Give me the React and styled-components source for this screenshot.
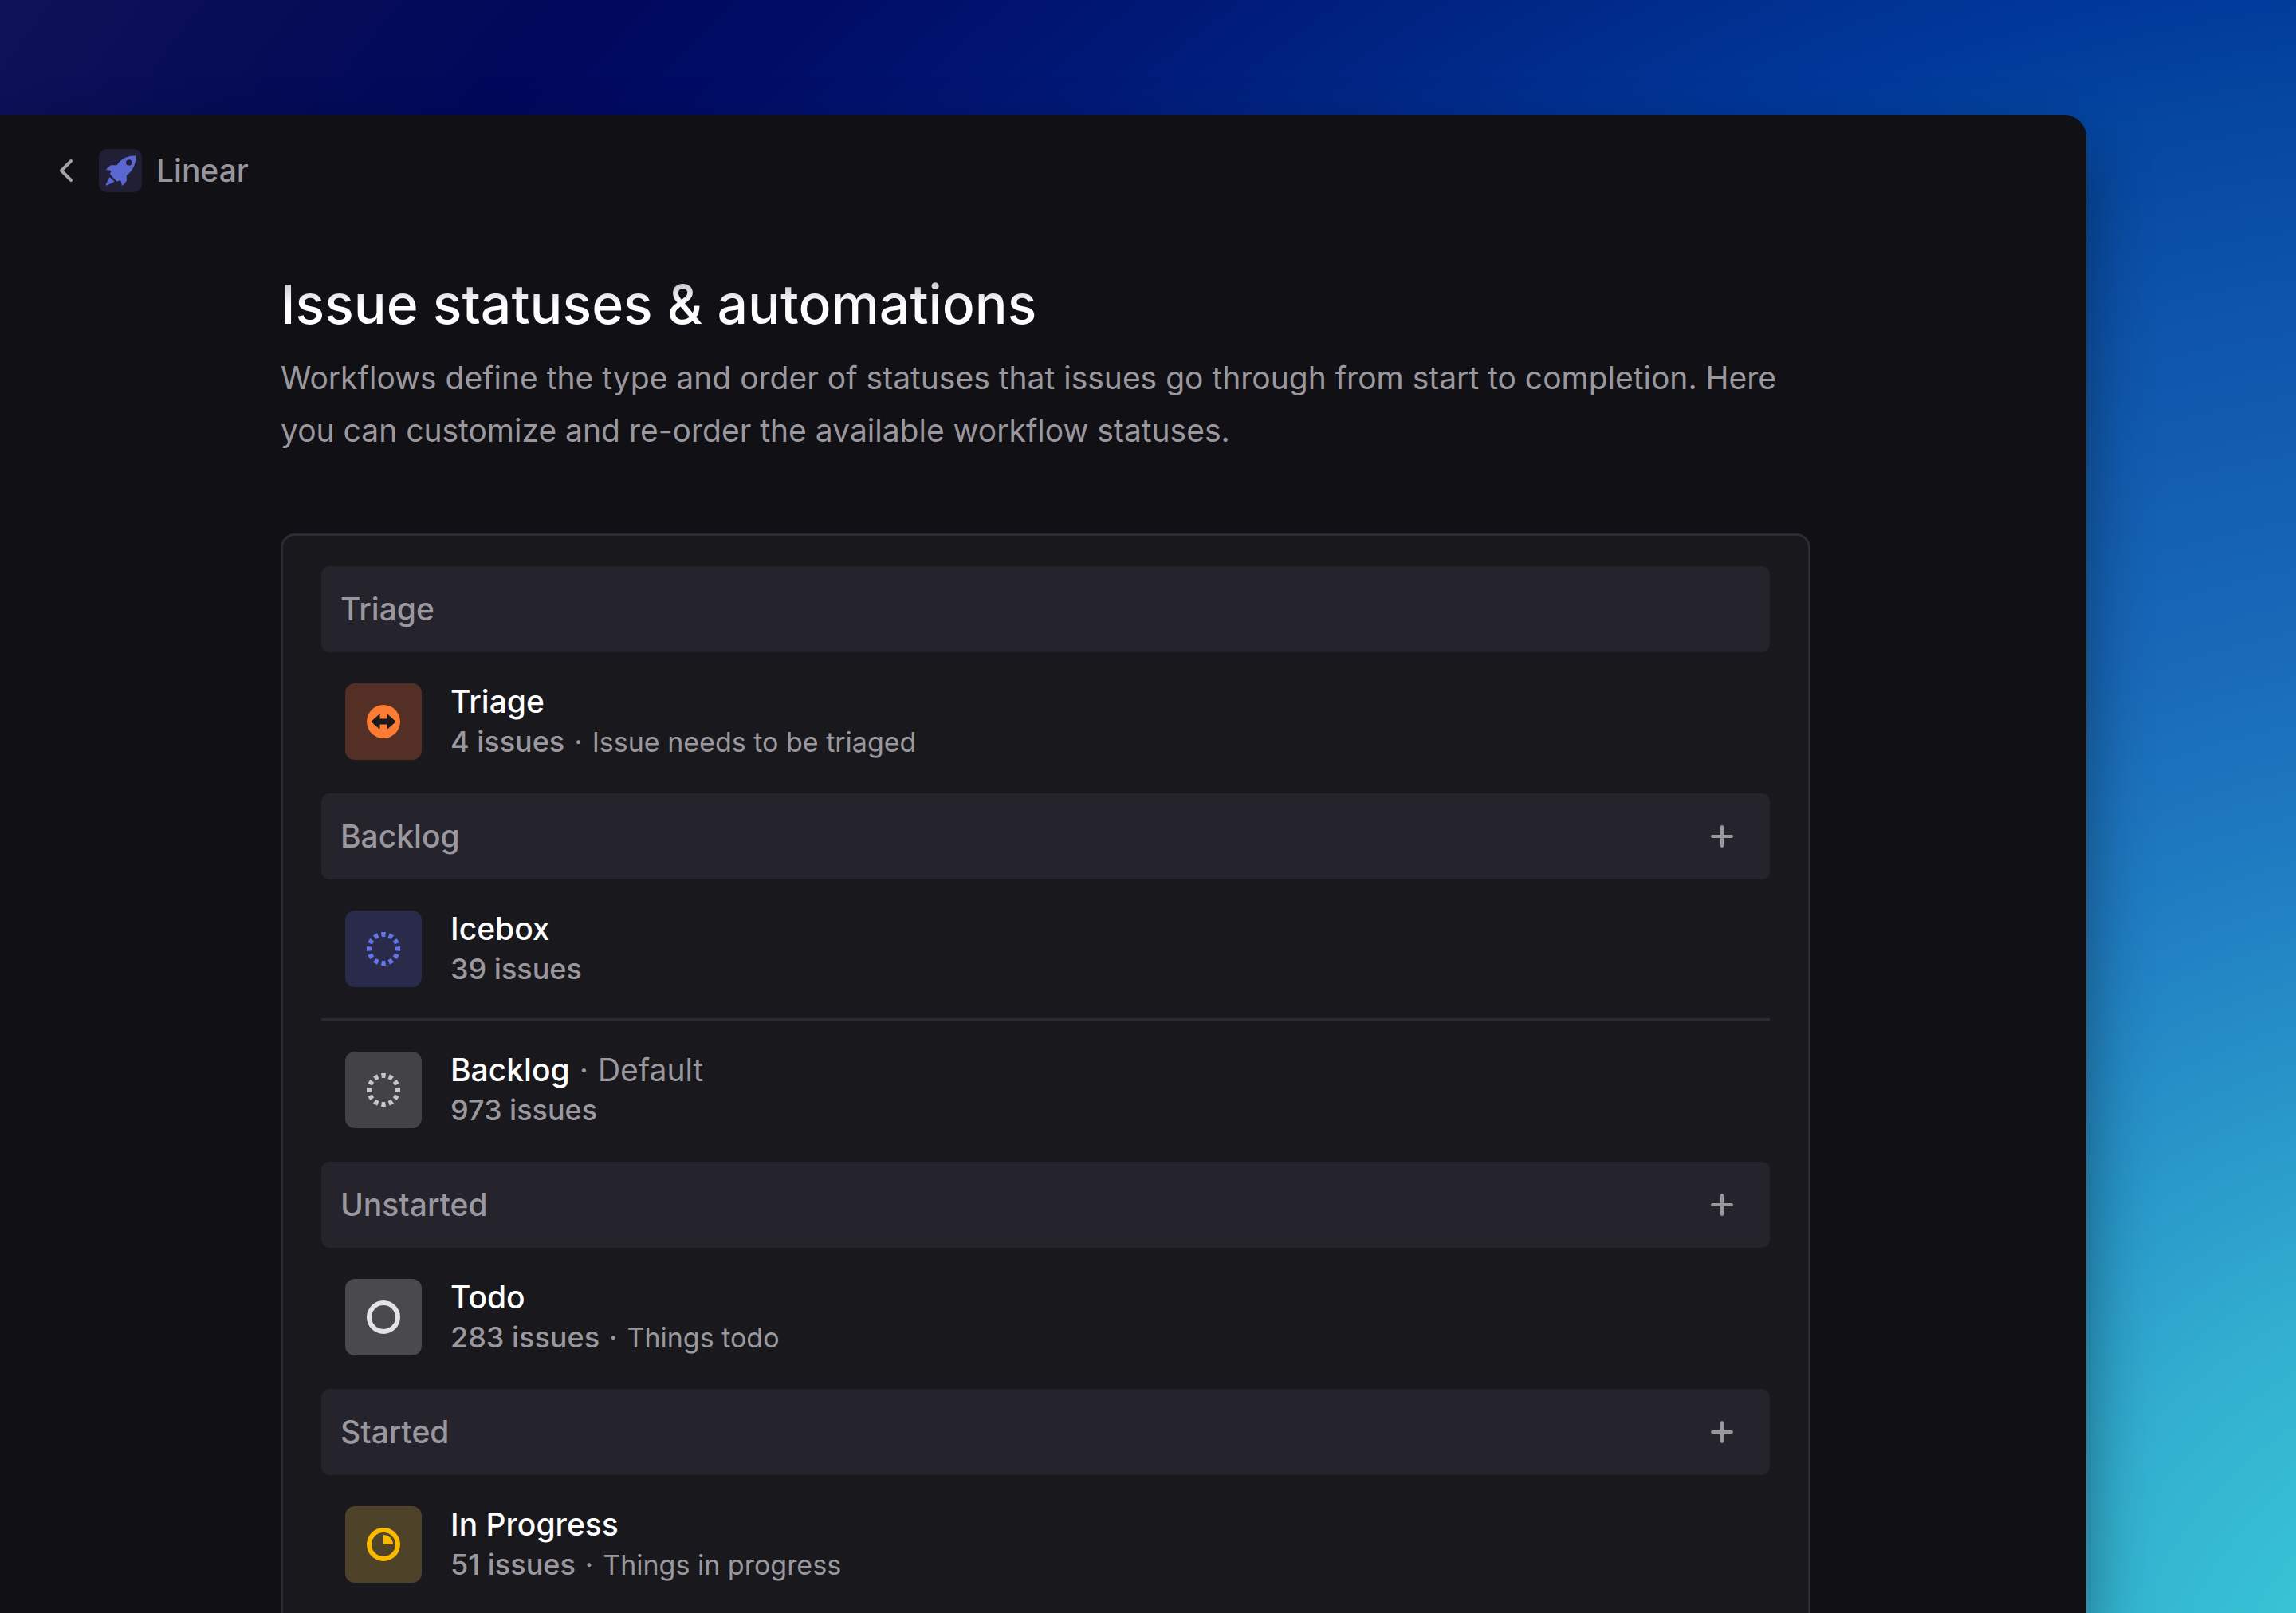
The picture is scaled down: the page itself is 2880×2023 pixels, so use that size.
import React from "react";
import styled, { createGlobalStyle } from "styled-components";

const GlobalStyle = createGlobalStyle`
  *, *::before, *::after { box-sizing: border-box; }
  body { margin: 0; background: #0c1055; }
  h1, h2, h3, p, ul { margin: 0; padding: 0; font-weight: inherit; }
  ul { list-style: none; }
`;

const Page = styled.div`
  height: 100vh;
  overflow: hidden;
  display: flex;
  padding: 144px 263px 0 0;
  font-family: Inter, "Liberation Sans", sans-serif;
  font-size: 39px;
  color: #9a989e;
  background: radial-gradient(
    circle farthest-corner at 110% 110%,
    #38c6d6 8%,
    #33b0d0 16%,
    #2896c9 23%,
    #207ec2 30%,
    #1868b8 38%,
    #0e55ab 48%,
    #0546a0 55%,
    #00389a 59%,
    #002988 65%,
    #001876 72%,
    #000c65 80%,
    #00085c 85%,
    #060c56 92%,
    #0e1258 100%
  );
`;

const Panel = styled.main`
  flex: 1;
  min-width: 0;
  display: flex;
  flex-direction: column;
  gap: 96px;
  padding-top: 43px;
  background: #111014;
  border-top-right-radius: 28px;
  box-shadow: 0 40px 80px rgba(0, 0, 0, 0.4);
`;

const Breadcrumb = styled.nav`
  display: flex;
  align-items: center;
  padding-left: 64px;
`;

const BackButton = styled.button`
  display: flex;
  align-items: center;
  justify-content: center;
  width: 36px;
  height: 54px;
  margin-right: 24px;
  padding: 0;
  border: 0;
  background: none;
  color: inherit;
`;

const TeamLink = styled.a`
  display: flex;
  align-items: center;
  gap: 18px;
  line-height: 54px;
  font-weight: 500;
  color: #97959b;
  text-decoration: none;
`;

const TeamBadge = styled.span`
  display: flex;
  width: 54px;
  height: 54px;
  border-radius: 10px;
  background: #211f36;
`;

const Content = styled.div`
  display: flex;
  flex-direction: column;
  padding: 0 346px 0 352px;
`;

const Title = styled.h1`
  align-self: flex-start;
  margin-bottom: 16px;
  font-size: 68px;
  line-height: 88px;
  font-weight: 500;
  color: transparent;
  background: linear-gradient(#c4c2ca 16%, #ffffff 52%);
  background-clip: text;
  -webkit-background-clip: text;
`;

const Intro = styled.p`
  margin-bottom: 96px;
  line-height: 66px;
`;

const Card = styled.div`
  padding: 38px 48px;
  border: 3px solid #2c2a32;
  border-radius: 18px;
  background: #19181c;
`;

const GroupHeader = styled.header`
  display: flex;
  align-items: center;
  justify-content: space-between;
  height: 108px;
  padding: 0 36px 0 24px;
  border-radius: 10px;
  background: #25232c;
`;

const GroupName = styled.h2`
  font-size: 39px;
  line-height: 52px;
  font-weight: 500;
`;

const AddButton = styled.button`
  display: flex;
  align-items: center;
  justify-content: center;
  width: 48px;
  height: 48px;
  padding: 0;
  border: 0;
  background: none;
  color: #9a989e;
`;

const Row = styled.li`
  display: flex;
  align-items: center;
  gap: 36px;
  padding: 39px 30px;
  height: 177px;
  border-bottom: 3px solid #2c2a32;

  &:last-child {
    border-bottom-color: transparent;
  }
`;

const StatusTile = styled.span`
  flex: none;
  display: flex;
  align-items: center;
  justify-content: center;
  width: 96px;
  height: 96px;
  border-radius: 12px;
  background: ${(p) => p.$fill};
  color: ${(p) => p.$ink};
`;

const RowText = styled.div`
  line-height: 51px;
`;

const StatusName = styled.h3`
  font-size: 39px;
`;

const Strong = styled.span`
  font-weight: 500;
  color: #ffffff;
`;

const Meta = styled.p`
  font-size: 36px;
`;

const Count = styled.span`
  font-weight: 500;
`;

const Separator = styled.span`
  padding: 0 12px;
`;

const Description = styled.span`
  font-size: 34px;
`;

const Chevron = () => (
  <svg width="20" height="32" viewBox="0 0 20 32" fill="none" aria-hidden="true">
    <path d="M17 4 5 16l12 12" stroke="#a3a1a6" strokeWidth="4" strokeLinecap="round" strokeLinejoin="round" />
  </svg>
);

const Rocket = () => (
  <svg width="54" height="54" viewBox="0 0 160 160" aria-hidden="true">
    <path
      fill="#5b67d0"
      fillRule="evenodd"
      d="M137 25C112 24 84 32 67 60L44 60C39 64 32 71 26 76L44 80C45 84 44 88 41 91C49 103 58 113 69 121C75 116 80 116 82 119L86 136C94 131 99 125 103 118L103 98C127 80 139 54 137 25ZM112 39a11 11 0 1 0 0 22a11 11 0 1 0 0-22Z"
    />
    <path fill="#5b67d0" d="M40 104 58 121 30 135C27 136 26 134 26 131Z" />
  </svg>
);

const Plus = () => (
  <svg width="32" height="32" viewBox="0 0 32 32" aria-hidden="true">
    <path d="M16 4v24M4 16h24" stroke="currentColor" strokeWidth="4" strokeLinecap="round" />
  </svg>
);

const icons = {
  triage: (
    <>
      <circle cx="21" cy="21" r="21" fill="currentColor" />
      <path d="M6 21 16 12v6h10v-6l10 9-10 9v-6H16v6Z" fill="#19181c" stroke="#19181c" strokeLinejoin="round" />
    </>
  ),
  backlog: Array.from({ length: 12 }, (_, i) => (
    <path key={i} d="M18 0h6l-.8 6h-4.400Z" fill="currentColor" transform={`rotate(${i * 30} 21 21)`} />
  )),
  todo: <circle cx="21" cy="21" r="18" fill="none" stroke="currentColor" strokeWidth="6" />,
  progress: (
    <>
      <circle cx="21" cy="21" r="18" fill="none" stroke="currentColor" strokeWidth="6" />
      <path d="M21 9a12 12 0 0 1 12 12H21Z" fill="currentColor" />
    </>
  ),
};

const StatusIcon = ({ kind }) => (
  <svg width="42" height="42" viewBox="0 0 42 42" aria-hidden="true">
    {icons[kind]}
  </svg>
);

const groups = [
  {
    name: "Triage",
    statuses: [
      { name: "Triage", count: 4, note: "Issue needs to be triaged", icon: "triage", fill: "#532f25", ink: "#fd7c33" },
    ],
  },
  {
    name: "Backlog",
    canAdd: true,
    statuses: [
      { name: "Icebox", count: 39, icon: "backlog", fill: "#2a2b4b", ink: "#6474ea" },
      { name: "Backlog", count: 973, isDefault: true, icon: "backlog", fill: "#434247", ink: "#c6c5c9" },
    ],
  },
  {
    name: "Unstarted",
    canAdd: true,
    statuses: [{ name: "Todo", count: 283, note: "Things todo", icon: "todo", fill: "#4a494d", ink: "#e3e2e6" }],
  },
  {
    name: "Started",
    canAdd: true,
    statuses: [
      { name: "In Progress", count: 51, note: "Things in progress", icon: "progress", fill: "#4e4228", ink: "#f8b900" },
    ],
  },
];

const Status = ({ status }) => (
  <Row>
    <StatusTile $fill={status.fill} $ink={status.ink}>
      <StatusIcon kind={status.icon} />
    </StatusTile>
    <RowText>
      <StatusName>
        <Strong>{status.name}</Strong>
        {status.isDefault && (
          <>
            <Separator>·</Separator>Default
          </>
        )}
      </StatusName>
      <Meta>
        <Count>{status.count} issues</Count>
        {status.note && (
          <>
            <Separator>·</Separator>
            <Description>{status.note}</Description>
          </>
        )}
      </Meta>
    </RowText>
  </Row>
);

export default function App() {
  return (
    <Page>
      <GlobalStyle />
      <Panel>
        <Breadcrumb aria-label="Breadcrumb">
          <BackButton type="button" aria-label="Back">
            <Chevron />
          </BackButton>
          <TeamLink href="#team">
            <TeamBadge>
              <Rocket />
            </TeamBadge>
            Linear
          </TeamLink>
        </Breadcrumb>
        <Content>
          <Title>Issue statuses &amp; automations</Title>
          <Intro>
            Workflows define the type and order of statuses that issues go through from start to completion. Here you
            can customize and re-order the available workflow statuses.
          </Intro>
          <Card>
            {groups.map((group) => (
              <section key={group.name}>
                <GroupHeader>
                  <GroupName>{group.name}</GroupName>
                  {group.canAdd && (
                    <AddButton type="button" aria-label={`Add ${group.name} status`}>
                      <Plus />
                    </AddButton>
                  )}
                </GroupHeader>
                <ul>
                  {group.statuses.map((status) => (
                    <Status key={status.name} status={status} />
                  ))}
                </ul>
              </section>
            ))}
          </Card>
        </Content>
      </Panel>
    </Page>
  );
}
